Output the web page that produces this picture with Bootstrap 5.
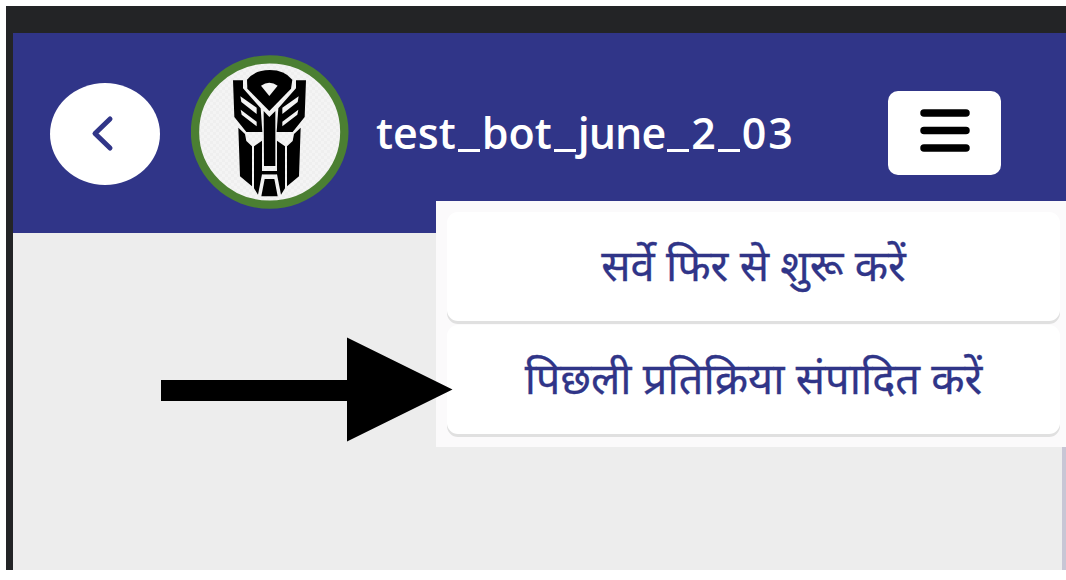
<!DOCTYPE html>
<html lang="hi">
<head>
<meta charset="utf-8">
<meta name="viewport" content="width=device-width, initial-scale=1">
<title>test_bot_june_2_03</title>
<link href="https://cdn.jsdelivr.net/npm/bootstrap@5.3.0/dist/css/bootstrap.min.css" rel="stylesheet">
<style>
body{background:#fff;font-family:"Noto Sans","Noto Sans Devanagari",sans-serif;overflow:hidden}
.device{height:564px;padding:27px 0 0 7px;margin:6px 0 0 6px;background:#232426}
.chat-screen{height:537px;background:#ededed;border-right:4px solid #c8c6d5}
.chat-header{height:200px;background:#303588;padding-left:37px;margin-right:-4px}
.back-btn{width:110px;height:102px;border-radius:50%;background:#fff;margin-top:2px}
.avatar{width:158px;height:154px;margin:-2px 0 0 31px}
.bot-name{width:418px;margin-left:27px;font-family:"Open Sans",sans-serif;font-size:43px;line-height:60px;font-weight:600;color:#fff;white-space:nowrap}
.bot-name i{display:inline-block;width:22px;height:3px;background:#fff;color:transparent;overflow:hidden;font-size:3px;line-height:3px;vertical-align:-3px;margin:0 2px}
.bot-name .tight{letter-spacing:-1px}
.bot-name .wide{letter-spacing:2px}
.menu-btn{width:113px;height:84px;border-radius:10px;background:#fff;margin-left:94px}
.option-menu{top:201px;left:436px;width:630px;height:246px;background:#fbfafb;padding:11px 6px 0 11px}
.option{height:109px;border-radius:11px;background:#fff;box-shadow:0 3px 0 #e0e0e0;margin-bottom:4px;color:#303588;font-size:43.400px;line-height:60px;white-space:nowrap;-webkit-text-stroke:.3px #303588;padding-bottom:3px}
.pointer{left:161px;top:337px}
</style>
</head>
<body>
<main class="device">
 <section class="chat-screen">
  <header class="chat-header d-flex align-items-center">
   <button class="back-btn btn p-0 border-0 flex-shrink-0 d-flex" aria-label="Back">
    <svg width="110" height="102" viewBox="0 0 110 102"><path d="M60 36 45 50.500 60 65" fill="none" stroke="#303588" stroke-width="5" stroke-linecap="round" stroke-linejoin="round"/></svg>
   </button>
   <svg class="avatar flex-shrink-0" viewBox="33 30 474 462" preserveAspectRatio="none">
    <defs><pattern id="dots" width="18" height="18" patternUnits="userSpaceOnUse"><path fill="#f4f4f4" d="M0 0h18v18H0z"/><path fill="#efefef" d="M0 0h9v9H0zM9 9h9v9H9z"/></pattern></defs>
    <ellipse cx="269" cy="261" rx="224" ry="218" fill="url(#dots)" stroke="#4b7f32" stroke-width="25"/>
    <path d="M201 104Q224 75 269 75T337 104L333 131 268 198 202 131Z"/>
    <path fill="#f3f3f3" d="M243 122Q268 104 293 122L268 153Z"/>
    <g>
     <path d="M159 106H189V130L242 190 247 261H199L163 216Z"/>
     <path d="M181 154 230 188V207L184 171ZM182 194 230 230V244L185 209Z" fill="#f3f3f3"/>
     <path d="M175 248 195 267 199 288 216 304V424L180 394ZM222 304 246 287V378H290V388H246L234 449 222 430Z"/>
    </g>
    <g transform="matrix(-1 0 0 1 537 0)">
     <path d="M159 106H189V130L242 190 247 261H199L163 216Z"/>
     <path d="M181 154 230 188V207L184 171ZM182 194 230 230V244L185 209Z" fill="#f3f3f3"/>
     <path d="M175 248 195 267 199 288 216 304V424L180 394ZM222 304 246 287V378H290V388H246L234 449 222 430Z"/>
    </g>
    <path d="M251 198 268 216 286 198V363H252ZM254 402H283L293 454H244Z"/>
   </svg>
   <div class="bot-name flex-shrink-0">test<i>_</i>bot<i>_</i><span class="tight">june</span><i>_</i>2<i>_</i><span class="wide">03</span></div>
   <button class="menu-btn btn p-0 border-0 flex-shrink-0 d-flex" aria-label="Menu">
    <svg width="113" height="84" viewBox="0 0 113 84"><path d="M36 22H78M36 39.500H78M36 57H78" stroke="#000" stroke-width="7.500" stroke-linecap="round"/></svg>
   </button>
  </header>
 </section>
</main>
<nav class="option-menu position-absolute">
 <a class="option d-flex align-items-center justify-content-center text-decoration-none" href="#">सर्वे फिर से शुरू करें</a>
 <a class="option d-flex align-items-center justify-content-center text-decoration-none" href="#">पिछली प्रतिक्रिया संपादित करें</a>
</nav>
<svg class="pointer position-absolute" width="292" height="106" viewBox="0 0 292 106"><path d="M0 43H186V0.500L291.500 52.500 186 104.500V64H0Z"/></svg>
</body>
</html>
